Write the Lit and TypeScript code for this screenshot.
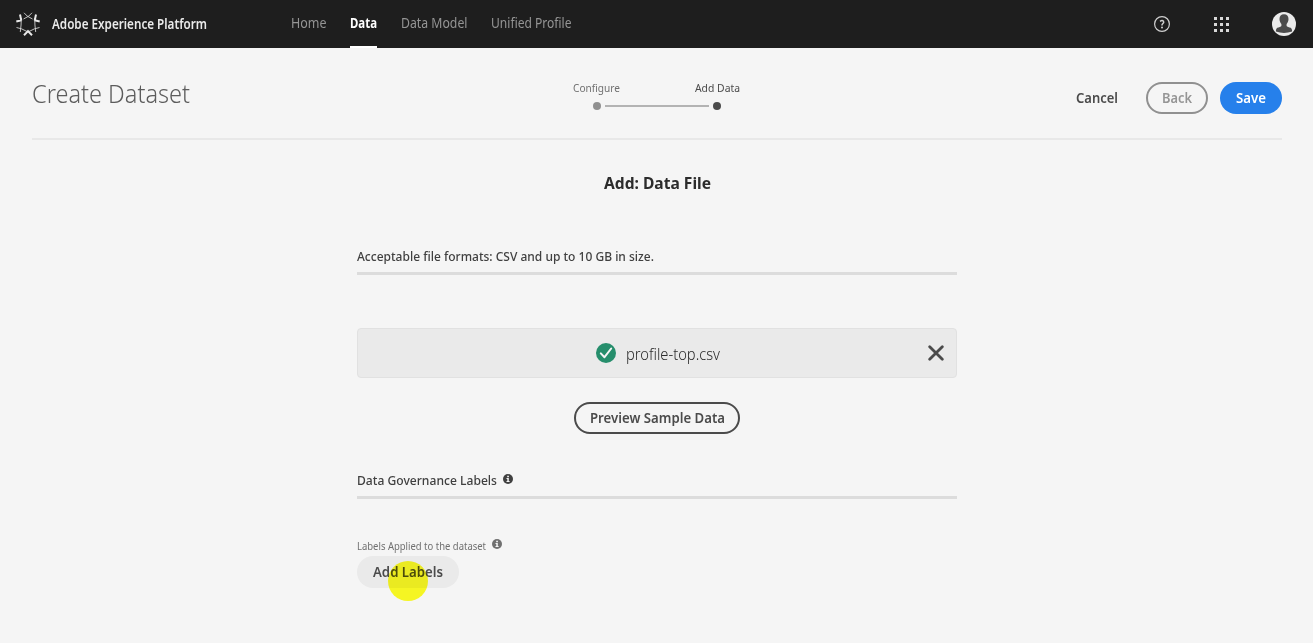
import { LitElement, html, css, svg } from "lit";
import { customElement, property, query, state } from "lit/decorators.js";

// One line of text condensed horizontally to a given measure.
@customElement("fit-text")
class FitText extends LitElement {
  static styles = css`
    :host { display: inline-block; white-space: nowrap; text-align: left; }
    .box { display: block; }
    .run { display: inline-block; transform-origin: 0 50%; }
  `;
  @property({ type: Number }) measure = 0;
  @state() private factor = 1;
  @query(".run") private run!: HTMLElement;
  firstUpdated() {
    if (this.measure && this.run.offsetWidth) {
      this.factor = this.measure / this.run.getBoundingClientRect().width;
    }
  }
  render() {
    return html`<span class="box" style="width:${this.measure}px"><span class="run" style="transform:scaleX(${this.factor})"><slot></slot></span></span>`;
  }
}

const logo = html`<svg class="logo" width="24" height="24" viewBox="0 0 24 24" fill="none" stroke="#e8e8e8" stroke-linecap="butt">
  <g stroke-width="0.8">
    <path d="M8 .8Q10.500 4.500 16.500 7M16 .8Q13.500 4.500 7.500 7"/>
    <path d="M5.300 6Q5.300 13 4.300 20M18.700 6Q18.700 13 19.700 20"/>
    <path d="M.5 15.500Q5 16 12 20M23.500 15.500Q19 16 12 20"/>
  </g>
  <g stroke-width="2">
    <path d="M4 2.500L5.300 8.500M.3 9.500L5.300 8.200M20 2.500L18.700 8.500M23.700 9.500L18.700 8.200"/>
    <path d="M8 23.300L12.700 18.400M16 23.300L11.300 18.400"/>
  </g>
</svg>`;

const dots = [0, 6, 12].flatMap((y) => [0, 6, 12].map((x) => svg`<rect x=${x} y=${y} width="3" height="3"/>`));

const info = html`<svg class="info" width="10" height="10" viewBox="0 0 10 10">
  <circle cx="5" cy="5" r="5" fill="currentColor"/>
  <path d="M4.200 1.700h1.700v1.500H4.200zM3.500 4.100h2.300v3h.8v1H3.500v-1h.8v-2h-.8z" fill="#f5f5f5"/>
</svg>`;

@customElement("app-root")
class AppRoot extends LitElement {
  static styles = css`
    :host { display: block; height: 643px; overflow: hidden; background: #f5f5f5; color: #4b4b4b; font-family: "Noto Sans", "Open Sans", sans-serif; font-size: 14px; line-height: 20px; }
    * { box-sizing: border-box; }
    svg { display: block; flex: none; }
    .bar { display: flex; height: 48px; background: #1e1e1e; padding: 0 17px 0 16px; align-items: center; color: #959595; }
    .brand { color: #eaeaea; font-weight: 600; margin-left: 12px; }
    nav { display: flex; align-self: stretch; gap: 23.500px; margin-left: 84px; }
    .tab { height: 48px; padding-top: 13px; font-size: 13.500px; }
    .tab.on { color: #fff; font-weight: 700; border-bottom: 2px solid #fff; }
    .tools { display: flex; align-items: center; margin-left: auto; }
    .apps { margin: 0 43px 0 44px; }
    .head { display: flex; align-items: flex-start; height: 92px; margin: 0 31px 0 32px; border-bottom: 2px solid #e8e8e8; }
    h1 { margin: 0; padding-top: 27px; font-size: 26.500px; line-height: 36px; font-weight: 300; color: #5c5c5c; }
    .steps { margin-left: 383px; padding-top: 32px; width: 167px; font-size: 11.500px; line-height: 16px; }
    .names { display: flex; justify-content: space-between; color: #707070; }
    .now { color: #4b4b4b; }
    .track { display: flex; align-items: center; margin: 6px 19px 0 20px; height: 8px; gap: 4px; }
    .dot { width: 8px; height: 8px; border-radius: 50%; background: #909090; }
    .dot.now { background: #4b4b4b; }
    .rail { flex: 1; height: 2px; background: #b3b3b3; }
    .actions { display: flex; align-items: center; margin-left: auto; padding-top: 34px; }
    .btn { display: inline-flex; align-items: center; justify-content: center; height: 32px; border-radius: 16px; font-family: inherit; font-size: 14px; line-height: 20px; font-weight: 600; padding: 0; border: 0; color: #4b4b4b; background: none; }
    .back { width: 62px; border: 2px solid #909090; color: #959595; margin: 0 12px 0 28px; }
    .save { width: 62px; background: #2680eb; color: #fff; }
    main { width: 600px; margin: 0 auto 0 357px; display: flex; flex-direction: column; }
    h2 { margin: 31px 0 0; align-self: center; font-size: 16.500px; line-height: 24px; font-weight: 700; color: #2c2c2c; }
    .section { display: flex; gap: 6px; border-bottom: 3px solid #dcdcdc; font-weight: 500; color: #404040; font-size: 13px; height: 30px; padding-top: 1px; }
    .section.formats { margin-top: 50px; }
    .section.gov { margin-top: 35px; }
    .section .info { margin-top: 4px; }
    .file { display: flex; align-items: center; height: 50px; margin-top: 53px; padding: 0 12px 0 238px; border: 1px solid #e1e1e1; border-radius: 4px; background: #eaeaea; font-size: 16.500px; font-weight: 300; line-height: 24px; }
    .file fit-text { margin-left: 10px; padding-top: 2px; color: #2c2c2c; }
    .close { margin-left: auto; }
    .preview { width: 166px; border: 2px solid #4b4b4b; align-self: center; margin-top: 24px; }
    .label { display: flex; gap: 6px; margin-top: 38px; font-size: 10.500px; line-height: 16px; color: #707070; height: 19px; }
    .label fit-text { padding-top: 1px; }
    .label .info { margin-top: 2px; }
    .add { position: relative; width: 102px; background: #eaeaea; }
    .pointer { position: absolute; left: 31px; top: 5px; width: 40px; height: 40px; border-radius: 50%; background: #ffff00; mix-blend-mode: multiply; opacity: .86; }
  `;
  render() {
    return html`
      <header class="bar">
        ${logo}
        <fit-text class="brand" measure="155">Adobe Experience Platform</fit-text>
        <nav>
          <div class="tab"><fit-text measure="35.5">Home</fit-text></div>
          <div class="tab on"><fit-text measure="27">Data</fit-text></div>
          <div class="tab"><fit-text measure="66.5">Data Model</fit-text></div>
          <div class="tab"><fit-text measure="80.5">Unified Profile</fit-text></div>
        </nav>
        <div class="tools">
          <svg width="16" height="16" viewBox="0 0 16 16" fill="none" stroke="#d0d0d0"><circle cx="8" cy="8" r="7.400" stroke-width="1.200"/><path d="M6 5.300Q8.200 3.900 9.500 5.200Q10.300 6.700 8.600 7.900Q7.900 8.400 8 9.500" stroke-width="1.500"/><circle cx="8" cy="11.500" r="1" fill="#d0d0d0" stroke="none"/></svg>
          <svg class="apps" width="15" height="15" fill="#d8d8d8">${dots}</svg>
          <svg width="24" height="24" viewBox="0 0 24 24"><circle cx="12" cy="12" r="12" fill="#eaeaea"/><path d="M12 2.300c-2.900 0-4.500 1.900-4.500 4.700 0 1.900.8 3.700 1.900 4.900v2c-.2.700-2.700 1.200-4.100 1.900-1.100.6-1.400 2.300-1.400 3.800Q12 22.500 20.100 19.600c0-1.500-.3-3.200-1.400-3.800-1.400-.7-3.900-1.200-4.100-1.900v-2c1.100-1.200 1.900-3 1.900-4.900 0-2.800-1.600-4.700-4.500-4.700z" fill="#4b4b4b"/></svg>
        </div>
      </header>
      <section class="head">
        <h1><fit-text measure="158">Create Dataset</fit-text></h1>
        <div class="steps">
          <div class="names"><fit-text measure="47">Configure</fit-text><fit-text class="now" measure="45">Add Data</fit-text></div>
          <div class="track"><i class="dot"></i><i class="rail"></i><i class="dot now"></i></div>
        </div>
        <div class="actions">
          <button class="btn"><fit-text measure="42">Cancel</fit-text></button>
          <button class="btn back"><fit-text measure="30">Back</fit-text></button>
          <button class="btn save"><fit-text measure="30">Save</fit-text></button>
        </div>
      </section>
      <main>
        <h2><fit-text measure="107">Add: Data File</fit-text></h2>
        <div class="section formats"><fit-text measure="297">Acceptable file formats: CSV and up to 10 GB in size.</fit-text></div>
        <div class="file">
          <svg width="20" height="20" viewBox="0 0 20 20"><circle cx="10" cy="10" r="10" fill="#268e6c"/><path d="M4.800 10.400L8.500 14.200L15.200 5.500" fill="none" stroke="#f5f5f5" stroke-width="2" stroke-linecap="round" stroke-linejoin="round"/></svg>
          <fit-text measure="94">profile-top.csv</fit-text>
          <svg class="close" width="16" height="16" viewBox="0 0 16 16"><path d="M1.700 1.700L14.300 14.300M14.300 1.700L1.700 14.300" stroke="#4b4b4b" stroke-width="2.800" stroke-linecap="round"/></svg>
        </div>
        <button class="btn preview"><fit-text measure="135">Preview Sample Data</fit-text></button>
        <div class="section gov"><fit-text measure="140">Data Governance Labels</fit-text>${info}</div>
        <div class="label"><fit-text measure="129">Labels Applied to the dataset</fit-text>${info}</div>
        <button class="btn add"><fit-text measure="70">Add Labels</fit-text><i class="pointer"></i></button>
      </main>
    `;
  }
}
